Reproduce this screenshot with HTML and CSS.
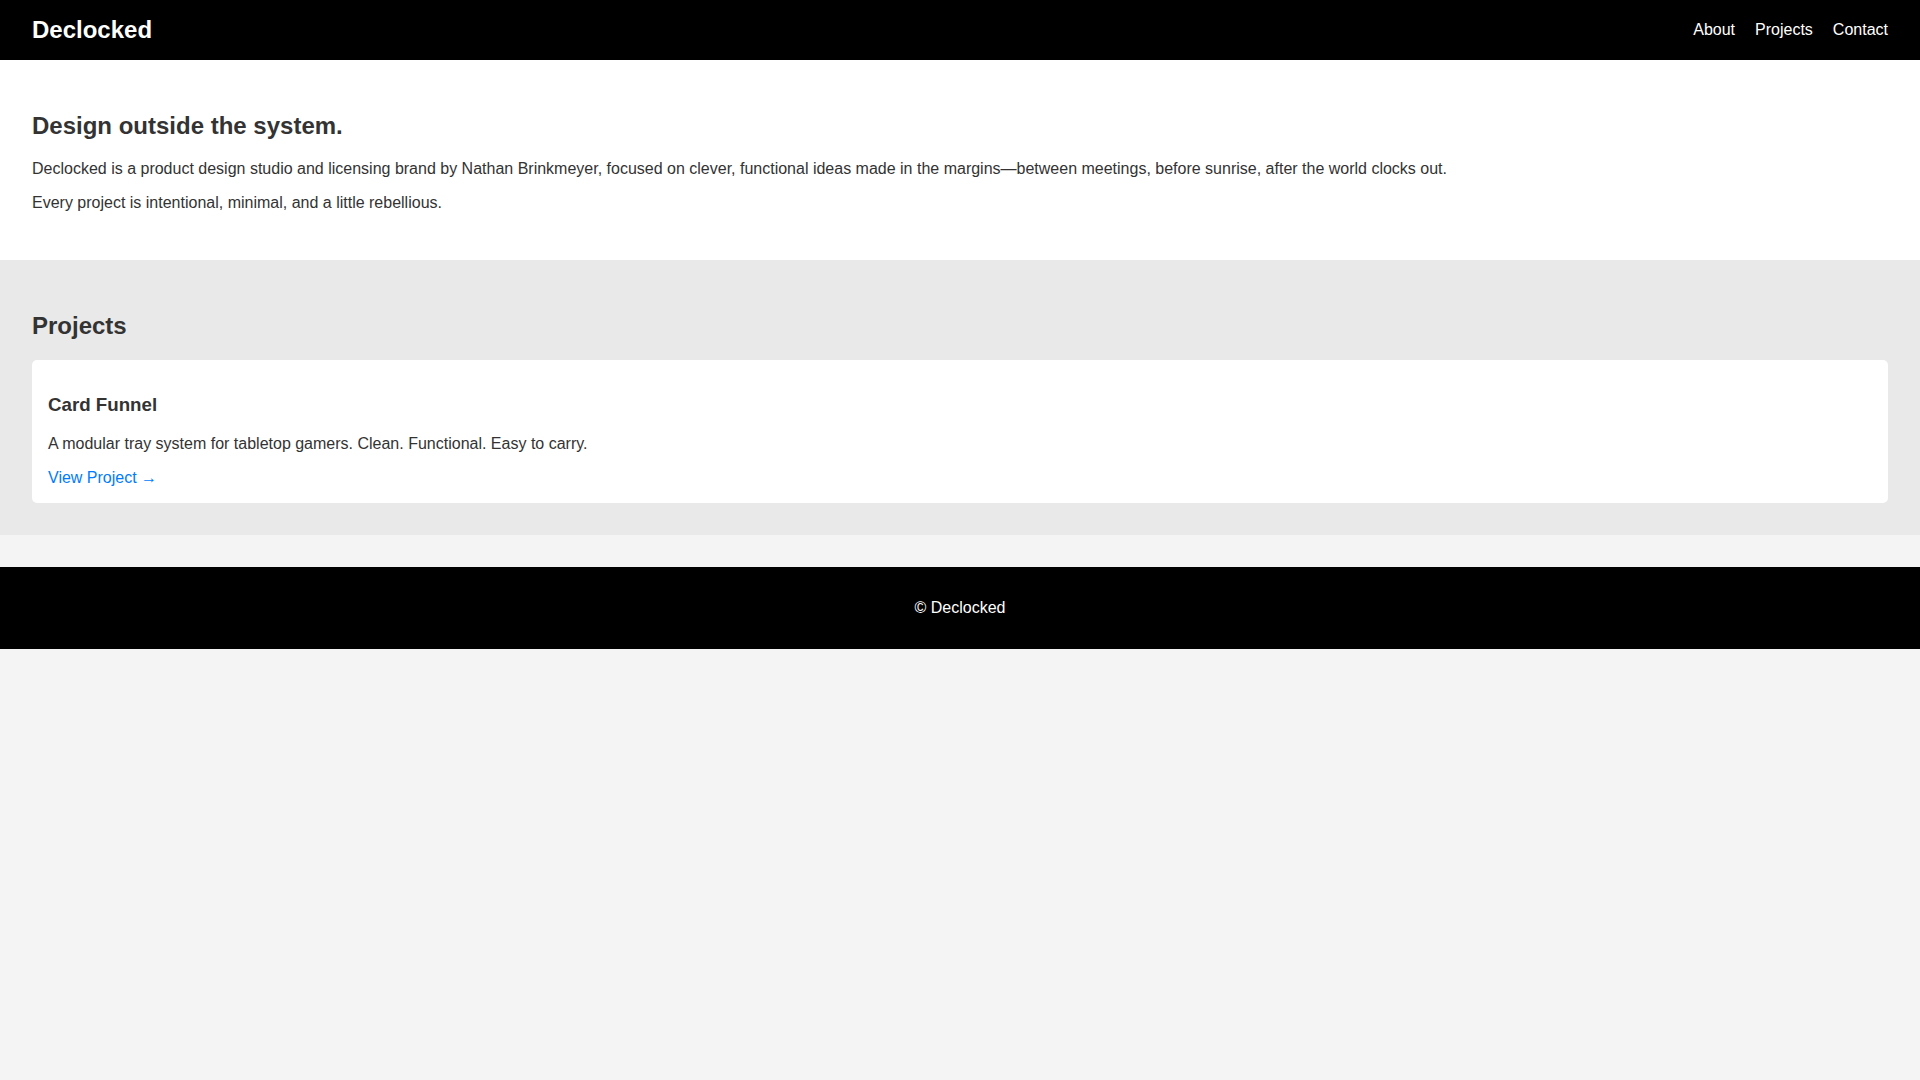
FILE: index.html
```html
<!DOCTYPE html>
<html lang="en">
<head>
<meta charset="utf-8">
<title>Declocked</title>
<link rel="stylesheet" href="styles.css">
</head>
<body>
<header class="site-header">
  <h1 class="logo">Declocked</h1>
  <nav class="nav">
    <a href="#about">About</a>
    <a href="#projects">Projects</a>
    <a href="#contact">Contact</a>
  </nav>
</header>
<section class="hero" id="about">
  <h2>Design outside the system.</h2>
  <p>Declocked is a product design studio and licensing brand by Nathan Brinkmeyer, focused on clever, functional ideas made in the margins—between meetings, before sunrise, after the world clocks out.</p>
  <p>Every project is intentional, minimal, and a little rebellious.</p>
</section>
<section class="projects" id="projects">
  <h2>Projects</h2>
  <div class="card">
    <h3>Card Funnel</h3>
    <p>A modular tray system for tabletop gamers. Clean. Functional. Easy to carry.</p>
    <a class="card-link" href="#">View Project →</a>
  </div>
</section>
<footer class="site-footer" id="contact">
  <p>© Declocked</p>
</footer>
</body>
</html>
```

FILE: styles.css
```css
body {
  margin: 0;
  font-family: "Liberation Sans", Arial, sans-serif;
  background: #f4f4f4;
  color: #333;
}
.site-header {
  background: #000;
  color: #fff;
  display: flex;
  justify-content: space-between;
  align-items: center;
  padding: 16px 32px;
}
.logo {
  margin: 0;
  font-size: 24px;
  line-height: 28px;
  font-weight: bold;
}
.nav {
  display: flex;
  gap: 20px;
}
.nav a {
  color: #fff;
  text-decoration: none;
  font-size: 16px;
}
.hero {
  background: #fff;
  padding: 32px;
}
.hero h2, .projects h2 {
  font-size: 24px;
  margin: 20px 0;
}
.hero p {
  margin: 16px 0;
}
.projects {
  background: #e9e9e9;
  padding: 32px;
}
.card {
  background: #fff;
  border-radius: 5px;
  padding: 16px;
}
.card h3 {
  font-size: 18.72px;
  margin: 18px 0 18.72px;
}
.card p {
  margin: 16px 0;
}
.card-link {
  color: #007bff;
  text-decoration: none;
}
.site-footer {
  background: #000;
  color: #fff;
  text-align: center;
  padding: 16px;
  margin-top: 32px;
}
.site-footer p {
  margin: 16px 0;
}
```
